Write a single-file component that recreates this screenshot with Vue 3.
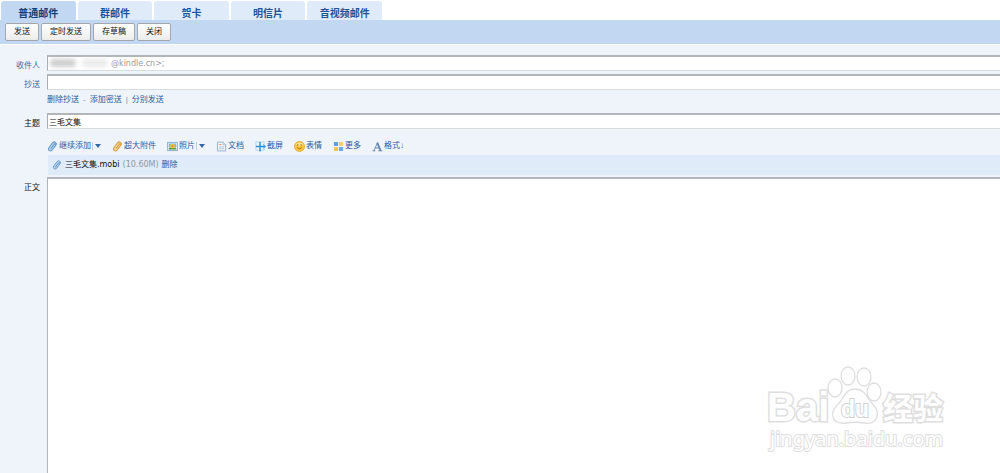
<script setup>
import { ref } from 'vue'

const tabs = ['普通邮件', '群邮件', '贺卡', '明信片', '音视频邮件']
const active = ref(0)
const actions = ['发送', '定时发送', '存草稿', '关闭']
const cc = ref('')
const subject = ref('三毛文集')
const body = ref('')
</script>

<template>
  <main class="compose">
    <nav class="tabs">
      <button
        v-for="(tab, i) in tabs"
        :key="tab"
        type="button"
        class="tab"
        :class="{ active: i === active }"
        @click="active = i"
      >{{ tab }}</button>
    </nav>

    <div class="toolbar">
      <button v-for="a in actions" :key="a" type="button" class="action">{{ a }}</button>
    </div>

    <form class="form" @submit.prevent>
      <label class="label link" for="to">收件人</label>
      <div class="recipient">
        <span class="blurred" aria-hidden="true"><i class="blot"></i><i class="blot pale"></i></span>
        <input id="to" class="field to" type="text" value="@kindle.cn>;" />
      </div>

      <label class="label link cc-label" for="cc">抄送</label>
      <input id="cc" v-model="cc" class="field cc" type="text" />

      <p class="cc-links">
        <a href="#">删除抄送</a><span>-</span><a href="#">添加密送</a><span>|</span><a href="#">分别发送</a>
      </p>

      <label class="label" for="subject">主题</label>
      <input id="subject" v-model="subject" class="field" type="text" />

      <div class="tools">
        <a href="#" class="tool">
          <svg class="icon" viewBox="0 0 12 12"><g transform="rotate(-8 6 6)" fill="none" stroke-linecap="round"><path stroke="#b4d3ec" stroke-width="3.6" d="M3.4 8.6 8.4 3.6"/><path stroke="#6397c6" stroke-width="1.1" d="M4 8 8 4Q9 3 9.7 3.8T9.4 5.5L5.2 9.7Q3.5 11.2 2 10T1.9 6.7L6.8 1.9Q8.4.6 9.8 1.9T10.2 4.8"/></g></svg>
          <span>继续添加</span><i class="bar"></i><i class="arrow"></i>
        </a>
        <a href="#" class="tool">
          <svg class="icon" viewBox="0 0 12 12"><g transform="rotate(-8 6 6)" fill="none" stroke-linecap="round"><path stroke="#f6d898" stroke-width="3.6" d="M3.4 8.6 8.4 3.6"/><path stroke="#d59a3f" stroke-width="1.1" d="M4 8 8 4Q9 3 9.7 3.8T9.4 5.5L5.2 9.7Q3.5 11.2 2 10T1.9 6.7L6.8 1.9Q8.4.6 9.8 1.9T10.2 4.8"/></g></svg>
          <span>超大附件</span>
        </a>
        <a href="#" class="tool">
          <svg class="icon" viewBox="0 0 12 12"><rect x=".7" y="1.5" width="10.6" height="9" fill="#e9f2fa" stroke="#86acd0"/><path fill="#79b8e9" d="M2 2.7h8v4.5H2z"/><path fill="#4c963b" d="M2 8 5 7l5 1v1.4H2z"/><circle cx="6" cy="5.5" r="2.6" fill="#f4c62f"/><circle cx="6" cy="5.5" r="1" fill="#d57b18"/></svg>
          <span>照片</span><i class="bar"></i><i class="arrow"></i>
        </a>
        <a href="#" class="tool">
          <svg class="icon" viewBox="0 0 12 12"><path d="M1.5 1.2h6l3 3v6.6h-9z" fill="#f7fafd" stroke="#8fabca"/><path d="M7.5 1.2v3h3" fill="#d5e4f4" stroke="#8fabca" stroke-width=".7"/><path d="M3 4h3" stroke="#e28a58"/><path d="M3 6.5h6M3 8.5h6" stroke="#91afd0" stroke-width=".8"/></svg>
          <span>文档</span>
        </a>
        <a href="#" class="tool">
          <svg class="icon" viewBox="0 0 12 12"><path d="M1 1h9v9H1z" fill="#eef8fe" stroke="#a5cbea" stroke-width=".8"/><path d="M5.5 1v10.5M1 6h10.5" stroke="#2b91d5" stroke-width="1.6"/><path d="m8.8 3.8 2.3 2.2-2.3 2.2" fill="none" stroke="#2b91d5"/></svg>
          <span>截屏</span>
        </a>
        <a href="#" class="tool">
          <svg class="icon" viewBox="0 0 12 12"><circle cx="6" cy="6" r="5.5" fill="#fbc83c" stroke="#e2a12b" stroke-width=".8"/><ellipse cx="6" cy="3.4" rx="3.4" ry="1.8" fill="#fde58e"/><path d="M4.2 3.6v1.5M7.8 3.6v1.5" stroke="#76501b"/><path d="M3 7q3 3.2 6 0" fill="none" stroke="#a35f16" stroke-width=".9"/></svg>
          <span>表情</span>
        </a>
        <a href="#" class="tool">
          <svg class="icon" viewBox="0 0 12 12"><rect x="1" y="1" width="4.5" height="4.5" rx=".5" fill="#5b9ee2"/><rect x="6.5" y="1" width="4.5" height="4.5" rx=".5" fill="#f8cd69"/><rect x="1" y="6.5" width="4.5" height="4.5" rx=".5" fill="#f5c252"/><rect x="6.5" y="6.5" width="4.5" height="4.5" rx=".5" fill="#6caae7"/></svg>
          <span>更多</span>
        </a>
        <a href="#" class="tool">
          <svg class="icon" viewBox="0 0 12 12"><path d="M.6 10.7h3M6.8 10.7h4.6M2.1 10.4 6 2l3.5 8.2M3.7 7.6h4.2" fill="none" stroke="#5d7fae"/><path d="m5.7 1.8 3.6 8.6" stroke="#5d7fae" stroke-width="1.7"/></svg>
          <span>格式↓</span>
        </a>
      </div>

      <div class="attachment">
        <svg class="icon" viewBox="0 0 12 12"><g transform="rotate(-8 6 6)" fill="none" stroke-linecap="round"><path stroke="#b4d3ec" stroke-width="3.6" d="M3.4 8.6 8.4 3.6"/><path stroke="#6397c6" stroke-width="1.1" d="M4 8 8 4Q9 3 9.7 3.8T9.4 5.5L5.2 9.7Q3.5 11.2 2 10T1.9 6.7L6.8 1.9Q8.4.6 9.8 1.9T10.2 4.8"/></g></svg>
        <span>三毛文集.mobi</span><span class="size">(10.60M)</span><a href="#">删除</a>
      </div>

      <label class="label" for="body">正文</label>
      <textarea id="body" v-model="body" class="editor"></textarea>
    </form>

    <svg class="watermark" viewBox="0 0 190 96" role="img" aria-label="Baidu 经验">
      <g fill="#fff" stroke="#dedede" stroke-width="1.3">
        <text class="wm-latin" x="7" y="56">Bai</text>
        <ellipse cx="75" cy="23" rx="7" ry="9"/>
        <ellipse cx="88" cy="11" rx="7" ry="9"/>
        <ellipse cx="104" cy="12" rx="7" ry="9"/>
        <ellipse cx="114" cy="27" rx="7" ry="9"/>
        <path d="M95 24c8 0 11 6 15 12 5 6 9 10 7 16-2 6-8 7-13 6-6-1-12-1-18 0-6 1-12-1-13-6-2-7 3-10 7-15 5-7 7-13 15-13z"/>
        <text class="wm-du" x="81" y="52">du</text>
        <text class="wm-cjk" x="123" y="54">经验</text>
        <text class="wm-url" x="10" y="81">jingyan.baidu.com</text>
      </g>
    </svg>
  </main>
</template>

<style>
body {
  background: #fff;
}
</style>

<style scoped>
.compose {
  position: relative;
  display: flex;
  flex-direction: column;
  min-height: 100vh;
  overflow: hidden;
  font: 8px/12px "Liberation Sans", "Noto Sans CJK SC", sans-serif;
  color: #111;
}
.compose button,
.compose input,
.compose textarea {
  box-sizing: border-box;
  font-family: inherit;
}
a {
  color: #285c9f;
  text-decoration: none;
}
.tabs {
  display: flex;
  gap: 2px;
  max-width: 381px;
  padding: 1px 0 0 1px;
}
.tab {
  flex: 1;
  height: 19px;
  margin: 0;
  padding: 6px 0 0;
  border: 0;
  border-radius: 3px 3px 0 0;
  background: #dfebf9;
  color: #1d5499;
  font-size: 10px;
  line-height: 13px;
  font-weight: 700;
}
.tab.active {
  background: #c2d8f2;
  color: #143f73;
}
.toolbar {
  display: flex;
  gap: 2px;
  padding: 3px 5px;
  background: #c2d8f2;
  border-bottom: 1px solid #fff;
}
.action {
  height: 18px;
  margin: 0;
  padding: 0 8px;
  border: 1px solid #a3a7ac;
  border-radius: 2px;
  background: linear-gradient(#fff, #ececec);
  color: #111;
  font-size: 8px;
  line-height: 16px;
}
.form {
  flex: 1;
  display: grid;
  grid-template-columns: 40px 1fr;
  grid-template-rows: auto auto auto auto auto auto 1fr;
  column-gap: 7px;
  padding-top: 10px;
  background: #eff4fb;
}
.label {
  padding-top: 5px;
  text-align: right;
}
.link {
  color: #3b6ba8;
}
.field {
  display: block;
  width: 100%;
  height: 16px;
  margin: 0;
  padding: 0 1px;
  border: 1px solid #d9dbdd;
  border-top: 2px solid #b2b5b9;
  border-left-color: #a9adb2;
  border-right: 0;
  border-radius: 0;
  background: #fff;
  color: #111;
  font-size: 8px;
}
.recipient {
  position: relative;
}
.compose .field.to {
  padding-left: 63px;
  color: #999;
  font-family: "DejaVu Sans", sans-serif;
}
.blurred {
  position: absolute;
  left: 3px;
  top: 2px;
  display: flex;
  align-items: center;
  gap: 6px;
  height: 12px;
}
.blot {
  width: 26px;
  height: 8px;
  border-radius: 4px;
  background: #cfcfcf;
  filter: blur(2px);
}
.blot.pale {
  background: #ebebeb;
}
.cc-label {
  padding-top: 7px;
}
.cc {
  margin-top: 2px;
}
.cc-links {
  grid-column: 2;
  display: flex;
  gap: 4px;
  margin: 3px 0 7px;
}
.cc-links span {
  color: #6f8fb8;
}
.tools {
  grid-column: 2;
  display: flex;
  align-items: center;
  gap: 11px;
  height: 12px;
  margin: 10px 0 3px;
}
.tool {
  display: flex;
  align-items: center;
  gap: 1px;
  white-space: nowrap;
}
.icon {
  width: 11px;
  height: 11px;
  flex: none;
}
.attachment .icon {
  width: 10px;
  height: 10px;
}
.bar {
  width: 1px;
  height: 8px;
  margin-right: 1px;
  background: #c3cddb;
}
.arrow {
  border: 3px solid transparent;
  border-top: 4px solid #3568a9;
  border-bottom: 0;
}
.attachment {
  grid-column: 2;
  display: flex;
  align-items: center;
  gap: 3px;
  height: 20px;
  margin: 0 0 2px 1px;
  padding-left: 4px;
  background: #dfebf9;
  font-family: "DejaVu Sans", "Noto Sans CJK SC", sans-serif;
}
.size {
  color: #8d99a8;
}
.editor {
  display: block;
  width: 100%;
  height: 100%;
  margin: 0;
  padding: 3px;
  border: 0 solid #b2b5b9;
  border-top-width: 2px;
  border-left-width: 1px;
  border-radius: 0;
  background: #fff;
  resize: none;
  font-size: 8px;
}
.watermark {
  position: absolute;
  right: 50px;
  bottom: 12px;
  width: 190px;
  height: 96px;
  overflow: visible;
  pointer-events: none;
}
.watermark text {
  paint-order: stroke;
  stroke-width: 3px;
}
.wm-latin {
  font: 700 40px "Liberation Sans", sans-serif;
}
.watermark .wm-du {
  font: 700 23px "Liberation Sans", sans-serif;
  stroke: #d2d2d2;
  stroke-width: 2px;
}
.wm-cjk {
  font: 700 30px "Noto Sans CJK SC", sans-serif;
}
.watermark .wm-url {
  font: 400 20px "Noto Sans", sans-serif;
  stroke-width: 2px;
}
</style>
